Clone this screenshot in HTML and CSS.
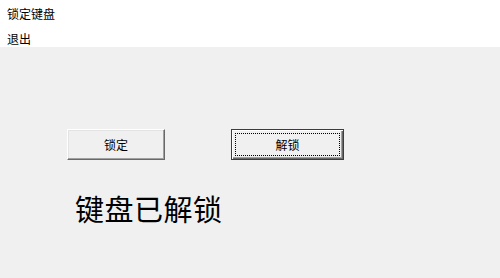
FILE: index.html
```html
<!DOCTYPE html>
<html lang="zh-CN">
<head>
<meta charset="utf-8">
<title>锁定键盘</title>
<link rel="stylesheet" href="styles.css">
</head>
<body>
<div class="menu">
  <div class="menu-item">锁定键盘</div>
  <div class="menu-item">退出</div>
</div>
<div class="content">
  <div class="buttons">
    <button class="btn">锁定</button>
    <button class="btn btn-default"><span class="focus">解锁</span></button>
  </div>
  <div class="status">键盘已解锁</div>
</div>
</body>
</html>
```
FILE: styles.css
```css
html, body {
  margin: 0;
  padding: 0;
  background: #f0f0f0;
  font-family: "Noto Sans CJK SC", "Noto Sans", sans-serif;
  color: #000;
}
.menu {
  background: #fff;
  height: 47px;
  padding-top: 1px;
  box-sizing: border-box;
}
.menu-item {
  font-size: 12px;
  line-height: 25px;
  padding-left: 7px;
}
.content {
  padding-top: 82px;
}
.buttons {
  display: flex;
  gap: 66px;
  padding-left: 67px;
}
.btn {
  font-family: inherit;
  font-size: 12px;
  color: #000;
  background: #f0f0f0;
  width: 98px;
  height: 31px;
  padding: 0;
  margin: 0;
  border: 1px solid;
  border-color: #fff #696969 #696969 #fff;
  box-shadow: inset -1px -1px 0 #a0a0a0, inset 1px 1px 0 #e3e3e3;
  display: flex;
  align-items: center;
  justify-content: center;
}
.btn-default {
  width: 113px;
  border: 1px solid #3c3c3c;
  box-shadow: inset 1px 1px 0 #fff, inset -1px -1px 0 #696969, inset -2px -2px 0 #a0a0a0;
  padding: 2px;
}
.focus {
  flex: 1;
  align-self: stretch;
  margin: 1px 1px 1px 1px;
  border: 1px dotted #000;
  display: flex;
  align-items: center;
  justify-content: center;
}
.status {
  margin-top: 28px;
  padding-left: 75px;
  font-size: 29px;
  line-height: 40px;
  letter-spacing: 0.5px;
}
```
